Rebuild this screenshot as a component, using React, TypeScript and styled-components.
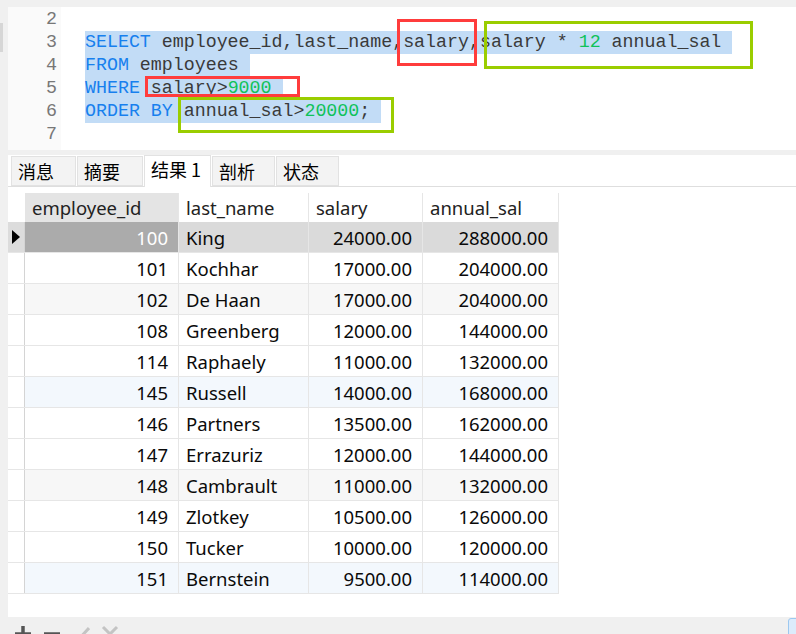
import React from "react";
import styled, { createGlobalStyle } from "styled-components";

const Global = createGlobalStyle`
  html, body { margin: 0; padding: 0; background: #f0f0f0; overflow: hidden; }
  #root { width: 796px; height: 634px; }
`;

const Shell = styled.div`
  width: 796px;
  height: 634px;
  display: flex;
  background: #f0f0f0;
  overflow: hidden;
`;

const LeftRail = styled.div`
  width: 8px;
  flex: none;
  padding-top: 23px;
  box-sizing: border-box;
`;

const RailMarker = styled.div`
  width: 3px;
  height: 29px;
  background: #d6d6d6;
`;

const Main = styled.div`
  flex: 1;
  display: flex;
  flex-direction: column;
  padding-top: 7px;
  min-width: 0;
`;

const Editor = styled.div`
  position: relative;
  height: 143px;
  box-sizing: border-box;
  padding-top: 1px;
  flex: none;
  background: linear-gradient(to right, #fafafa 0, #fafafa 53px, #fff 53px);
  font-family: "Liberation Mono", "DejaVu Sans Mono", monospace;
  font-size: 18.3px;
  display: flex;
  flex-direction: column;
`;

const EditorLine = styled.div`
  display: flex;
  height: 23px;
  line-height: 23px;
  flex: none;
`;

const LineNo = styled.span`
  width: 49px;
  flex: none;
  text-align: right;
  color: #777;
`;

const LineCode = styled.span`
  padding-left: 28px;
  color: #3a3a3a;
  white-space: pre;
`;

const Sel = styled.span`
  background: #c2dcf6;
  display: inline-block;
  height: 23px;
`;

const Kw = styled.span`
  color: #1780ee;
`;

const Num = styled.span`
  color: #10c25a;
`;

const Mark = styled.div<{ $c: string }>`
  position: absolute;
  box-sizing: border-box;
  border: 3px solid ${(p) => p.$c};
  pointer-events: none;
`;

const Divider = styled.div`
  height: 5px;
  flex: none;
`;

const Results = styled.div`
  flex: 1;
  display: flex;
  flex-direction: column;
  background: #fff;
  min-height: 0;
`;

const TabBar = styled.div`
  height: 32px;
  flex: none;
  display: flex;
  align-items: flex-end;
  padding-left: 3px;
  border-bottom: 1px solid #dedede;
  box-sizing: border-box;
`;

const Tab = styled.div<{ $w: number; $active?: boolean }>`
  width: ${(p) => p.$w}px;
  height: ${(p) => (p.$active ? 32 : 30)}px;
  margin-bottom: ${(p) => (p.$active ? -1 : 0)}px;
  box-sizing: border-box;
  margin-right: 1px;
  padding-left: 6px;
  padding-top: ${(p) => (p.$active ? 1 : 2)}px;
  background: ${(p) => (p.$active ? "#fff" : "#f3f3f3")};
  border: 1px solid #e2e2e2;
  border-bottom: ${(p) => (p.$active ? "none" : "1px solid #e2e2e2")};
  font-family: "Noto Sans CJK SC", "Noto Sans", sans-serif;
  font-size: 18px;
  line-height: 24px;
  color: #000;
  white-space: nowrap;
`;

const GridArea = styled.div`
  flex: 1;
  padding-top: 6px;
  font-family: "Noto Sans", "Noto Sans CJK SC", sans-serif;
  font-size: 18.5px;
  color: #0a0a0a;
`;

const Row = styled.div<{ $h: number; $bg?: string; $line?: boolean }>`
  display: flex;
  height: ${(p) => p.$h}px;
  box-sizing: border-box;
  background: ${(p) => p.$bg || "transparent"};
  width: 551px;
  border-bottom: ${(p) => (p.$line ? "1px solid #e6e6e6" : "none")};
`;

const Indicator = styled.div<{ $active?: boolean; $edge?: boolean }>`
  width: 17px;
  flex: none;
  box-sizing: border-box;
  background: ${(p) => (p.$active ? "#dcdcdc" : "#fff")};
  border-right: ${(p) => (p.$edge ? "1px solid #d4d4d4" : "none")};
  display: flex;
  align-items: center;
  justify-content: center;
`;

const Cell = styled.div<{ $w: number; $right?: boolean; $bg?: string; $fg?: string }>`
  width: ${(p) => p.$w}px;
  flex: none;
  box-sizing: border-box;
  border-right: 1px solid #e6e6e6;
  padding: 0 ${(p) => (p.$right ? 10 : 7)}px 0 ${(p) => (p.$right ? 0 : 7)}px;
  background: ${(p) => p.$bg || "transparent"};
  color: ${(p) => p.$fg || "inherit"};
  display: flex;
  align-items: center;
  justify-content: ${(p) => (p.$right ? "flex-end" : "flex-start")};
  white-space: nowrap;
`;

const HeadCell = styled(Cell)`
  color: #222;
`;

const BottomBar = styled.div`
  height: 17px;
  box-sizing: border-box;
  flex: none;
  display: flex;
  align-items: flex-start;
  padding-top: 8px;
  padding-left: 6px;
  gap: 11px;
  position: relative;
  background: #f0f0f0;
`;

const ToolIcon = styled.svg`
  flex: none;
`;

const CornerButton = styled.div`
  position: absolute;
  right: -10px;
  top: 1px;
  width: 16px;
  height: 30px;
  border: 1px solid #9cc8f0;
  border-radius: 3px;
  background: #dcebfb;
`;

const cols = [154, 130, 114, 136];

type R = { id: string; name: string; sal: string; ann: string; bg?: string; sel?: boolean };
const rows: R[] = [
  { id: "100", name: "King", sal: "24000.00", ann: "288000.00", bg: "#dadada", sel: true },
  { id: "101", name: "Kochhar", sal: "17000.00", ann: "204000.00" },
  { id: "102", name: "De Haan", sal: "17000.00", ann: "204000.00", bg: "#f7f7f7" },
  { id: "108", name: "Greenberg", sal: "12000.00", ann: "144000.00" },
  { id: "114", name: "Raphaely", sal: "11000.00", ann: "132000.00" },
  { id: "145", name: "Russell", sal: "14000.00", ann: "168000.00", bg: "#f3f8fd" },
  { id: "146", name: "Partners", sal: "13500.00", ann: "162000.00" },
  { id: "147", name: "Errazuriz", sal: "12000.00", ann: "144000.00" },
  { id: "148", name: "Cambrault", sal: "11000.00", ann: "132000.00", bg: "#f7f7f7" },
  { id: "149", name: "Zlotkey", sal: "10500.00", ann: "126000.00" },
  { id: "150", name: "Tucker", sal: "10000.00", ann: "120000.00" },
  { id: "151", name: "Bernstein", sal: "9500.00", ann: "114000.00", bg: "#f3f8fd" },
];

const codeLines: { n: string; code: React.ReactNode }[] = [
  { n: "2", code: null },
  {
    n: "3",
    code: (
      <Sel>
        <Kw>SELECT</Kw> employee_id,last_name,salary,salary * <Num>12</Num> annual_sal{" "}
      </Sel>
    ),
  },
  {
    n: "4",
    code: (
      <Sel>
        <Kw>FROM</Kw> employees{" "}
      </Sel>
    ),
  },
  {
    n: "5",
    code: (
      <Sel>
        <Kw>WHERE</Kw> salary&gt;<Num>9000</Num>{" "}
      </Sel>
    ),
  },
  {
    n: "6",
    code: (
      <Sel>
        <Kw>ORDER BY</Kw> annual_sal&gt;<Num>20000</Num>;{" "}
      </Sel>
    ),
  },
  { n: "7", code: null },
];

export default function App() {
  return (
    <Shell>
      <Global />
      <LeftRail>
        <RailMarker />
      </LeftRail>
      <Main>
        <Editor>
          {codeLines.map((l) => (
            <EditorLine key={l.n}>
              <LineNo>{l.n}</LineNo>
              <LineCode>{l.code}</LineCode>
            </EditorLine>
          ))}
          <Mark $c="#ff3c3c" style={{ left: 389, top: 12, width: 80, height: 47 }} />
          <Mark $c="#9acd00" style={{ left: 476, top: 14, width: 269, height: 48 }} />
          <Mark $c="#ff3c3c" style={{ left: 137, top: 69, width: 155, height: 21 }} />
          <Mark $c="#9acd00" style={{ left: 170, top: 90, width: 216, height: 36 }} />
        </Editor>
        <Divider />
        <Results>
          <TabBar>
            <Tab $w={65}>消息</Tab>
            <Tab $w={66}>摘要</Tab>
            <Tab $w={67} $active>
              结果 1
            </Tab>
            <Tab $w={63}>剖析</Tab>
            <Tab $w={63}>状态</Tab>
          </TabBar>
          <GridArea>
            <Row $h={29}>
              <Indicator />
              <HeadCell $w={cols[0]} $bg="#e4e4e4">
                employee_id
              </HeadCell>
              <HeadCell $w={cols[1]}>last_name</HeadCell>
              <HeadCell $w={cols[2]}>salary</HeadCell>
              <HeadCell $w={cols[3]}>annual_sal</HeadCell>
            </Row>
            {rows.map((r) => (
              <Row key={r.id} $h={31} $bg={r.bg} $line>
                <Indicator $edge $active={r.sel}>
                  {r.sel && (
                    <svg width="8" height="14" viewBox="0 0 8 14">
                      <path d="M0 0 L8 7 L0 14 Z" fill="#000" />
                    </svg>
                  )}
                </Indicator>
                <Cell $w={cols[0]} $right $bg={r.sel ? "#ababab" : undefined} $fg={r.sel ? "#fff" : undefined}>
                  {r.id}
                </Cell>
                <Cell $w={cols[1]}>{r.name}</Cell>
                <Cell $w={cols[2]} $right>
                  {r.sal}
                </Cell>
                <Cell $w={cols[3]} $right>
                  {r.ann}
                </Cell>
              </Row>
            ))}
          </GridArea>
          <BottomBar>
            <ToolIcon width="18" height="18" viewBox="0 0 18 18">
              <path d="M9 1 V17 M1 9 H17" stroke="#555" strokeWidth="3.5" />
            </ToolIcon>
            <ToolIcon width="18" height="18" viewBox="0 0 18 18">
              <path d="M1 9 H17" stroke="#555" strokeWidth="3.5" />
            </ToolIcon>
            <ToolIcon width="18" height="18" viewBox="0 0 18 18">
              <path d="M1 10 L6 15 L17 3" stroke="#c4c4c4" strokeWidth="3" fill="none" />
            </ToolIcon>
            <ToolIcon width="18" height="18" viewBox="0 0 18 18">
              <path d="M2 2 L16 16 M16 2 L2 16" stroke="#c4c4c4" strokeWidth="3" />
            </ToolIcon>
            <CornerButton />
          </BottomBar>
        </Results>
      </Main>
    </Shell>
  );
}
